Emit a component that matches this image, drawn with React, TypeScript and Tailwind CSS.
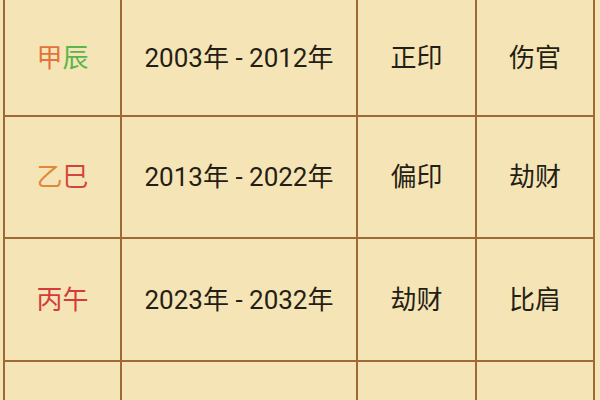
import React from "react";

type Row = {
  gz: { ch: string; color: string }[];
  years: string;
  a: string;
  b: string;
};

const rows: Row[] = [
  {
    gz: [
      { ch: "甲", color: "text-[#e2733a]" },
      { ch: "辰", color: "text-[#5bb54a]" },
    ],
    years: "2003年 - 2012年",
    a: "正印",
    b: "伤官",
  },
  {
    gz: [
      { ch: "乙", color: "text-[#e0893a]" },
      { ch: "巳", color: "text-[#d2453e]" },
    ],
    years: "2013年 - 2022年",
    a: "偏印",
    b: "劫财",
  },
  {
    gz: [
      { ch: "丙", color: "text-[#d53a3a]" },
      { ch: "午", color: "text-[#d53a3a]" },
    ],
    years: "2023年 - 2032年",
    a: "劫财",
    b: "比肩",
  },
];

const heights = ["h-[117px]", "h-[122px]", "h-[123px]"];

export default function App() {
  return (
    <div
      className="w-[600px] h-[400px] overflow-hidden bg-[#f5e5b6] text-[#251e14]"
      style={{ fontFamily: "Roboto, 'Noto Sans CJK SC', sans-serif" }}
    >
      <div className="ml-[3px] w-[592px] border-l-2 border-[#9e6935] grid grid-cols-[117px_236px_119px_118px] text-[26px] leading-none">
        {rows.map((r, i) => (
          <React.Fragment key={i}>
            <div className={`${heights[i]} border-r-2 border-b-2 border-[#9e6935] flex items-center justify-center`}>
              {r.gz.map((g, j) => (
                <span key={j} className={g.color}>
                  {g.ch}
                </span>
              ))}
            </div>
            <div className={`${heights[i]} border-r-2 border-b-2 border-[#9e6935] flex items-center justify-center`}>
              {r.years}
            </div>
            <div className={`${heights[i]} border-r-2 border-b-2 border-[#9e6935] flex items-center justify-center`}>
              {r.a}
            </div>
            <div className={`${heights[i]} border-r-2 border-b-2 border-[#9e6935] flex items-center justify-center`}>
              {r.b}
            </div>
          </React.Fragment>
        ))}
        <div className="h-[122px] border-r-2 border-[#9e6935]" />
        <div className="h-[122px] border-r-2 border-[#9e6935]" />
        <div className="h-[122px] border-r-2 border-[#9e6935]" />
        <div className="h-[122px] border-r-2 border-[#9e6935]" />
      </div>
    </div>
  );
}
